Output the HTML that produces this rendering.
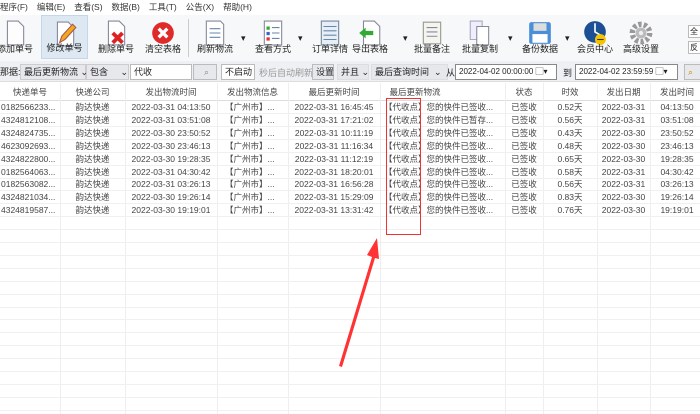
<!DOCTYPE html>
<html><head><meta charset="utf-8"><style>
*{margin:0;padding:0;box-sizing:border-box}
body{width:700px;height:414px;overflow:hidden;background:#fff;font-family:"Liberation Sans","Noto Sans CJK SC",sans-serif;font-size:9px;color:#222;position:relative}
.abs{position:absolute}
.menu{top:0;left:0;width:700px;height:15px;background:#fff;font-size:8.5px;line-height:15px;white-space:nowrap;color:#333}
.menu span{margin-right:9px}
.tb{top:15px;left:0;width:700px;height:46px;background:#f7f8fa}
.btn{position:absolute;top:0;height:44px;text-align:center;font-size:9px;white-space:nowrap}
.btn .lb{position:absolute;bottom:4px;left:0;right:0}
.ic{position:absolute;top:5px;left:50%;margin-left:-12px;width:24px;height:26px}
.fb{top:61px;left:0;width:700px;height:21px;background:#eef0f3;border-bottom:1px solid #ddd}
.box{position:absolute;top:3px;height:16px;border:1px solid #bbb;background:#fff;line-height:14px;padding-left:3px;font-size:9px;white-space:nowrap}
.gr{background:#e6e8ec}
.hd{top:83px;left:0;width:700px;height:18px;background:#fff;border-bottom:1px solid #ddd}
.c{position:absolute;text-align:center;white-space:nowrap;overflow:hidden;font-size:8.5px}
.vl{position:absolute;top:83px;bottom:0;width:1px;background:#eee}
.row{position:absolute;left:0;width:700px;height:13px;border-bottom:1px solid #f0f0f0}
.row .c{line-height:12px;color:#444}
.hd .c{line-height:18px;color:#444}
</style></head><body>
<div class="abs menu"><span>程序(F)</span><span>编辑(E)</span><span>查看(S)</span><span>数据(B)</span><span>工具(T)</span><span>公告(X)</span><span>帮助(H)</span></div>
<div class="abs tb">
 <div class="btn" style="left:-8px;width:46px"><svg class="ic" viewBox="0 0 22 24"><path d="M4 1h10l5 5v17H4z" fill="#fdfdfd" stroke="#889"/></svg><div class="lb">添加单号</div></div>
 <div class="btn" style="left:41px;width:47px;background:#dde8f3;border:1px solid #c5d6e8"><svg class="ic" viewBox="0 0 22 24"><path d="M4 1h10l5 5v17H4z" fill="#fff" stroke="#889"/><path d="M6 20l2-6 10-11 3 3-10 11z" fill="#f3a91c" stroke="#a55"/></svg><div class="lb">修改单号</div></div>
 <div class="btn" style="left:93px;width:46px"><svg class="ic" viewBox="0 0 22 24"><path d="M4 1h10l5 5v17H4z" fill="#fff" stroke="#889"/><path d="M8 12l9 9M17 12l-9 9" stroke="#d22" stroke-width="3.5"/></svg><div class="lb">删除单号</div></div>
 <div class="btn" style="left:140px;width:46px"><svg class="ic" viewBox="0 0 22 24"><circle cx="11" cy="12" r="10" fill="#e02a2a"/><path d="M7 8l8 8M15 8l-8 8" stroke="#fff" stroke-width="3"/></svg><div class="lb">清空表格</div></div>
 <div class="abs" style="left:188px;top:4px;width:1px;height:38px;background:#ccc"></div>
 <div class="btn" style="left:192px;width:46px"><svg class="ic" viewBox="0 0 22 24"><path d="M3 1h13l3 3v19H3z" fill="#fff" stroke="#889"/><path d="M6 8h10M6 12h10M6 16h10" stroke="#68a"/></svg><div class="lb">刷新物流</div></div>
 <div class="abs" style="left:241px;top:18px">▾</div>
 <div class="btn" style="left:250px;width:46px"><svg class="ic" viewBox="0 0 22 24"><path d="M3 1h16v22H3z" fill="#fff" stroke="#889"/><rect x="5" y="6" width="3" height="3" fill="#3a3"/><rect x="5" y="11" width="3" height="3" fill="#36c"/><rect x="5" y="16" width="3" height="3" fill="#d33"/><path d="M10 7h7M10 12h7M10 17h7" stroke="#68a"/></svg><div class="lb">查看方式</div></div>
 <div class="abs" style="left:298px;top:18px">▾</div>
 <div class="btn" style="left:307px;width:46px"><svg class="ic" viewBox="0 0 22 24"><path d="M3 1h16v22H3z" fill="#e8eef6" stroke="#789"/><path d="M5 6h12M5 10h12M5 14h12M5 18h12" stroke="#68a"/></svg><div class="lb">订单详情</div></div>
 <div class="btn" style="left:347px;width:46px"><svg class="ic" viewBox="0 0 22 24"><path d="M5 1h10l5 5v17H5z" fill="#fff" stroke="#889"/><path d="M1 12l6-5v3h7v4H7v3z" fill="#3a3"/></svg><div class="lb">导出表格</div></div>
 <div class="abs" style="left:403px;top:18px">▾</div>
 <div class="btn" style="left:409px;width:46px"><svg class="ic" viewBox="0 0 22 24"><path d="M3 2h16v20H3z" fill="#f4f4f0" stroke="#998"/><path d="M6 7h10M6 11h10M6 15h10" stroke="#889"/></svg><div class="lb">批量备注</div></div>
 <div class="btn" style="left:457px;width:46px"><svg class="ic" viewBox="0 0 22 24"><path d="M2 1h11v17H2z" fill="#eef" stroke="#aab"/><path d="M8 6h11v17H8z" fill="#fff" stroke="#889"/></svg><div class="lb">批量复制</div></div>
 <div class="abs" style="left:508px;top:18px">▾</div>
 <div class="btn" style="left:517px;width:46px"><svg class="ic" viewBox="0 0 22 24"><rect x="1" y="2" width="20" height="20" rx="2" fill="#4a8fd8"/><rect x="5" y="3" width="12" height="7" fill="#ddd"/><rect x="4" y="13" width="14" height="8" fill="#fff"/></svg><div class="lb">备份数据</div></div>
 <div class="abs" style="left:565px;top:18px">▾</div>
 <div class="btn" style="left:572px;width:46px"><svg class="ic" viewBox="0 0 22 24"><circle cx="11" cy="11" r="10" fill="#1d4f95"/><path d="M11 3v8l5 3" stroke="#fff" stroke-width="1.5" fill="none"/><circle cx="16" cy="18" r="5" fill="#f5c400"/><path d="M13 18h6" stroke="#333"/></svg><div class="lb">会员中心</div></div>
 <div class="btn" style="left:618px;width:46px"><svg class="ic" viewBox="0 0 22 24"><circle cx="11" cy="12" r="8" fill="none" stroke="#999" stroke-width="5" stroke-dasharray="3 2"/><circle cx="11" cy="12" r="5" fill="#bbb"/><circle cx="11" cy="12" r="2" fill="#eee"/></svg><div class="lb">高级设置</div></div>
 <div class="abs" style="left:688px;top:10px;width:14px;height:13px;border:1px solid #bbb;background:#fff;font-size:8px;line-height:11px;padding-left:1px">全</div>
 <div class="abs" style="left:688px;top:26px;width:14px;height:13px;border:1px solid #bbb;background:#fff;font-size:8px;line-height:11px;padding-left:1px">反</div>
</div>
<div class="abs fb">
 <div class="abs" style="left:0;top:4px">那据:</div>
 <div class="box gr" style="left:20px;width:66px;border-color:#ccc">最后更新物流 ⌄</div>
 <div class="box gr" style="left:86px;width:43px;border-color:#ccc">包含 &nbsp;&nbsp;&nbsp; ⌄</div>
 <div class="box" style="left:130px;width:62px">代收</div>
 <div class="box gr" style="left:193px;width:24px;text-align:center;color:#888">⌕</div>
 <div class="box" style="left:221px;width:34px">不启动</div>
 <div class="abs" style="left:259px;top:5px;color:#999">秒后自动刷新</div>
 <div class="box gr" style="left:312px;width:22px">设置</div>
 <div class="box gr" style="left:337px;width:32px;border-color:#ddd">并且 ⌄</div>
 <div class="box gr" style="left:371px;width:77px;border-color:#ddd">最后查询时间 &nbsp;⌄</div>
 <div class="abs" style="left:446px;top:5px">从</div>
 <div class="box" style="left:455px;width:102px;font-size:8px;border-color:#888">2022-04-02 00:00:00 ▢▾</div>
 <div class="abs" style="left:563px;top:5px">到</div>
 <div class="box" style="left:575px;width:103px;font-size:8px;border-color:#888">2022-04-02 23:59:59 ▢▾</div>
 <div class="box gr" style="left:684px;width:20px;color:#c80">⌕</div>
</div>
<div class="abs hd">
 <div class="c" style="left:0;width:60px">快递单号</div>
 <div class="c" style="left:60px;width:65px">快递公司</div>
 <div class="c" style="left:125px;width:92px">发出物流时间</div>
 <div class="c" style="left:217px;width:71px">发出物流信息</div>
 <div class="c" style="left:288px;width:92px">最后更新时间</div>
 <div class="c" style="left:380px;width:70px">最后更新物流</div>
 <div class="c" style="left:505px;width:38px">状态</div>
 <div class="c" style="left:543px;width:54px">时效</div>
 <div class="c" style="left:597px;width:53px">发出日期</div>
 <div class="c" style="left:650px;width:54px">发出时间</div>
</div>
<div class="vl" style="left:60px"></div><div class="vl" style="left:125px"></div><div class="vl" style="left:217px"></div><div class="vl" style="left:288px"></div><div class="vl" style="left:380px"></div><div class="vl" style="left:505px"></div><div class="vl" style="left:543px"></div><div class="vl" style="left:597px"></div><div class="vl" style="left:650px"></div>
<div id="rows"></div>
<script>
var d=[["0182566233...","2022-03-31 04:13:50","2022-03-31 16:45:45","您的快件已签收...","0.52天","2022-03-31","04:13:50"],
["4324812108...","2022-03-31 03:51:08","2022-03-31 17:21:02","您的快件已暂存...","0.56天","2022-03-31","03:51:08"],
["4324824735...","2022-03-30 23:50:52","2022-03-31 10:11:19","您的快件已签收...","0.43天","2022-03-30","23:50:52"],
["4623092693...","2022-03-30 23:46:13","2022-03-31 11:16:34","您的快件已签收...","0.48天","2022-03-30","23:46:13"],
["4324822800...","2022-03-30 19:28:35","2022-03-31 11:12:19","您的快件已签收...","0.65天","2022-03-30","19:28:35"],
["0182564063...","2022-03-31 04:30:42","2022-03-31 18:20:01","您的快件已签收...","0.58天","2022-03-31","04:30:42"],
["0182563082...","2022-03-31 03:26:13","2022-03-31 16:56:28","您的快件已签收...","0.56天","2022-03-31","03:26:13"],
["4324821034...","2022-03-30 19:26:14","2022-03-31 15:29:09","您的快件已签收...","0.83天","2022-03-30","19:26:14"],
["4324819587...","2022-03-30 19:19:01","2022-03-31 13:31:42","您的快件已签收...","0.76天","2022-03-30","19:19:01"]];
var h="";
for(var i=0;i<24;i++){var t=101+i*12.9;h+='<div class="row" style="top:'+t+'px">';
if(i<d.length){var r=d[i];
h+='<div class="c" style="left:0;width:58px;text-align:left;padding-left:1px">'+r[0]+'</div><div class="c" style="left:60px;width:65px">韵达快递</div><div class="c" style="left:125px;width:92px">'+r[1]+'</div><div class="c" style="left:217px;width:71px;text-align:left;padding-left:8px">【广州市】...</div><div class="c" style="left:288px;width:92px">'+r[2]+'</div><div class="c" style="left:382px;width:123px;text-align:left;padding-left:2px">【代收点】'+r[3]+'</div><div class="c" style="left:505px;width:38px">已签收</div><div class="c" style="left:543px;width:54px">'+r[4]+'</div><div class="c" style="left:597px;width:53px">'+r[5]+'</div><div class="c" style="left:650px;width:54px">'+r[6]+'</div>';}
h+='</div>';}
document.getElementById('rows').innerHTML=h;
</script>
<div class="abs" style="left:386px;top:98px;width:35px;height:137px;border:1.5px solid #e33"></div>
<svg class="abs" style="left:0;top:0" width="700" height="414"><path d="M339 366L372 257L367 255L377 238L379 259L375 258L342 367Z" fill="#f33"/></svg>
</body></html>
